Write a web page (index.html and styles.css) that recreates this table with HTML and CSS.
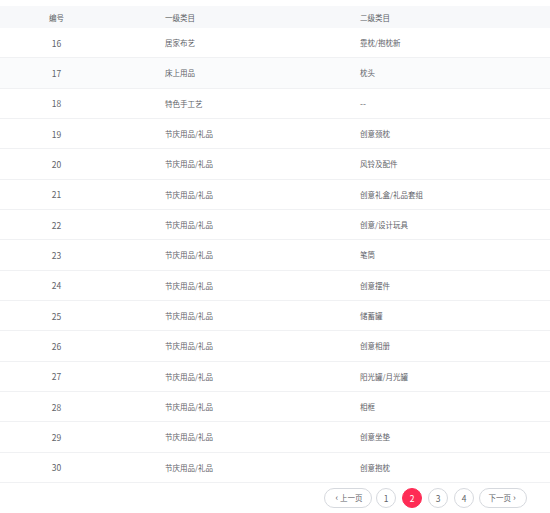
FILE: index.html
```html
<!DOCTYPE html>
<html lang="zh">
<head>
<meta charset="utf-8">
<link rel="stylesheet" href="styles.css">
</head>
<body>
<div class="page">
  <div class="table">
    <div class="row head"><div class="c1">编号</div><div class="c2">一级类目</div><div class="c3">二级类目</div></div>
    <div class="row"><div class="c1 n">16</div><div class="c2">居家布艺</div><div class="c3">靠枕/抱枕新</div></div>
    <div class="row hover"><div class="c1 n">17</div><div class="c2">床上用品</div><div class="c3">枕头</div></div>
    <div class="row"><div class="c1 n">18</div><div class="c2">特色手工艺</div><div class="c3 n">--</div></div>
    <div class="row"><div class="c1 n">19</div><div class="c2">节庆用品/礼品</div><div class="c3">创意颈枕</div></div>
    <div class="row"><div class="c1 n">20</div><div class="c2">节庆用品/礼品</div><div class="c3">风铃及配件</div></div>
    <div class="row"><div class="c1 n">21</div><div class="c2">节庆用品/礼品</div><div class="c3">创意礼盒/礼品套组</div></div>
    <div class="row"><div class="c1 n">22</div><div class="c2">节庆用品/礼品</div><div class="c3">创意/设计玩具</div></div>
    <div class="row"><div class="c1 n">23</div><div class="c2">节庆用品/礼品</div><div class="c3">笔筒</div></div>
    <div class="row"><div class="c1 n">24</div><div class="c2">节庆用品/礼品</div><div class="c3">创意摆件</div></div>
    <div class="row"><div class="c1 n">25</div><div class="c2">节庆用品/礼品</div><div class="c3">储蓄罐</div></div>
    <div class="row"><div class="c1 n">26</div><div class="c2">节庆用品/礼品</div><div class="c3">创意相册</div></div>
    <div class="row"><div class="c1 n">27</div><div class="c2">节庆用品/礼品</div><div class="c3">阳光罐/月光罐</div></div>
    <div class="row"><div class="c1 n">28</div><div class="c2">节庆用品/礼品</div><div class="c3">相框</div></div>
    <div class="row"><div class="c1 n">29</div><div class="c2">节庆用品/礼品</div><div class="c3">创意坐垫</div></div>
    <div class="row"><div class="c1 n">30</div><div class="c2">节庆用品/礼品</div><div class="c3">创意抱枕</div></div>
  </div>
  <div class="pager">
    <button class="btn wide"><span class="arr">‹</span> 上一页</button>
    <button class="btn num">1</button>
    <button class="btn num active">2</button>
    <button class="btn num">3</button>
    <button class="btn num">4</button>
    <button class="btn wide">下一页 <span class="arr">›</span></button>
  </div>
</div>
</body>
</html>
```

FILE: styles.css
```css
html, body {
  margin: 0;
  padding: 0;
  background: #ffffff;
}
body {
  font-family: "Noto Sans CJK SC", "Noto Sans", sans-serif;
  color: #5f6369;
  font-size: 7.5px;
}
.page {
  padding-top: 6px;
  width: 550px;
}
.table {
  display: flex;
  flex-direction: column;
}
.row {
  display: grid;
  grid-template-columns: 113px 195px 1fr;
  align-items: center;
  height: 30.333px;
  box-sizing: border-box;
  border-bottom: 1px solid #f0f1f3;
}
.row.head {
  height: 22px;
  background: #f7f8fa;
  border-bottom: none;
  color: #5a5e64;
}
.row.hover {
  background: #fafbfc;
}
.c1 {
  text-align: center;
}
.n {
  font-size: 8.5px;
}
.c2, .c3 {
  padding-left: 52px;
}
.pager {
  display: flex;
  justify-content: flex-end;
  align-items: center;
  padding-top: 5px;
  padding-right: 23px;
}
.btn {
  font-family: "Noto Sans CJK SC", "Noto Sans", sans-serif;
  font-size: 7.5px;
  color: #5f6369;
  background: #fff;
  border: 1px solid #d6d9de;
  height: 20px;
  border-radius: 10px;
  padding: 0;
  margin-left: 6px;
  box-sizing: border-box;
  display: flex;
  align-items: center;
  justify-content: center;
  line-height: 1;
}
.btn.num {
  width: 20px;
  font-size: 8.5px;
}
.btn.wide {
  width: 48px;
}
.btn.wide:first-child {
  margin-left: 0;
}
.btn.num:nth-child(2) {
  margin-left: 4px;
}
.btn.wide:last-child {
  margin-left: 5px;
}
.btn.active {
  background: #fe2c55;
  border-color: #fe2c55;
  color: #fff;
}
.arr {
  font-size: 9px;
  margin: 0 2px;
}
```
